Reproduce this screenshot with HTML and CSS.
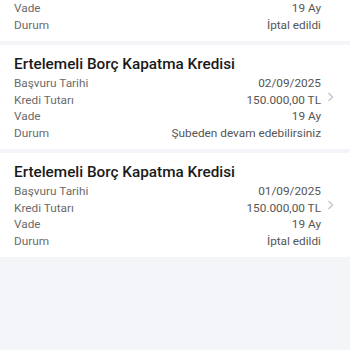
FILE: index.html
```html
<!DOCTYPE html>
<html lang="tr">
<head>
<meta charset="utf-8">
<link rel="stylesheet" href="styles.css">
</head>
<body>
<div class="list">
  <div class="card card-partial">
    <div class="content">
      <div class="row"><span class="label">Vade</span><span class="value">19 Ay</span></div>
      <div class="row"><span class="label">Durum</span><span class="value">İptal edildi</span></div>
    </div>
    <span class="chev-space"></span>
  </div>
  <div class="card">
    <div class="content">
      <div class="title">Ertelemeli Borç Kapatma Kredisi</div>
      <div class="row"><span class="label">Başvuru Tarihi</span><span class="value">02/09/2025</span></div>
      <div class="row"><span class="label">Kredi Tutarı</span><span class="value">150.000,00 TL</span></div>
      <div class="row"><span class="label">Vade</span><span class="value">19 Ay</span></div>
      <div class="row"><span class="label">Durum</span><span class="value">Şubeden devam edebilirsiniz</span></div>
    </div>
    <svg class="chev" viewBox="0 0 10 14" width="10" height="14"><path d="M3.5 3 L7.5 7 L3.5 11" fill="none" stroke="#c4c4c4" stroke-width="1.3"/></svg>
  </div>
  <div class="card">
    <div class="content">
      <div class="title">Ertelemeli Borç Kapatma Kredisi</div>
      <div class="row"><span class="label">Başvuru Tarihi</span><span class="value">01/09/2025</span></div>
      <div class="row"><span class="label">Kredi Tutarı</span><span class="value">150.000,00 TL</span></div>
      <div class="row"><span class="label">Vade</span><span class="value">19 Ay</span></div>
      <div class="row"><span class="label">Durum</span><span class="value">İptal edildi</span></div>
    </div>
    <svg class="chev" viewBox="0 0 10 14" width="10" height="14"><path d="M3.5 3 L7.5 7 L3.5 11" fill="none" stroke="#c4c4c4" stroke-width="1.3"/></svg>
  </div>
</div>
</body>
</html>
```
FILE: styles.css
```css
html, body {
  margin: 0;
  padding: 0;
  background: #f4f5f9;
  height: 350px;
  overflow: hidden;
  font-family: Roboto, "Noto Sans", sans-serif;
}
.list {
  display: flex;
  flex-direction: column;
  gap: 4px;
}
.card {
  background: #fff;
  display: flex;
  align-items: center;
  padding: 8px 15px 8px 14px;
}
.card-partial {
  padding-top: 0;
}
.content {
  flex: 1;
}
.title {
  font-size: 15.3px;
  line-height: 22px;
  color: #1a1a1a;
  font-weight: 500;
}
.row {
  display: flex;
  justify-content: space-between;
  font-size: 11.8px;
  line-height: 16.5px;
}
.label {
  color: #6b6b6b;
}
.value {
  color: #555;
}
.chev {
  margin-left: 4px;
  display: block;
}
.chev-space {
  width: 10px;
  margin-left: 4px;
}
```
